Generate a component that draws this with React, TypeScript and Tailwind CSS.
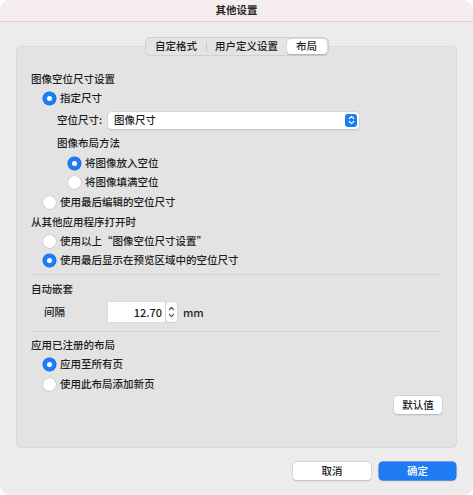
import React from "react";

const font = { fontFamily: '"Noto Sans CJK SC", "Noto Sans", sans-serif' };

function Radio({ checked, label }: { checked?: boolean; label: string }) {
    return (
        <div className="flex items-center gap-[4px]">
            {checked ? (
                <span className="flex h-[13px] w-[13px] items-center justify-center rounded-full bg-[#1b7cf5] shadow-[0_0_0_0.5px_#1468d8]">
                    <span className="h-[5px] w-[5px] rounded-full bg-white" />
                </span>
            ) : (
                <span className="h-[13px] w-[13px] rounded-full bg-white shadow-[0_0_0_0.5px_#c4c4c4,0_0.5px_1px_rgba(0,0,0,0.15)]" />
            )}
            <span>{label}</span>
        </div>
    );
}

function Separator() {
    return <div className="h-px bg-[#d2d2d2]" />;
}

export default function App() {
    return (
        <div className="h-[495px] w-[473px] bg-white" style={font}>
            <div className="flex h-full flex-col overflow-hidden rounded-[10px] bg-[#ececec] text-[10.5px] font-medium leading-none text-[#1e1e1e]">
                {/* title bar */}
                <div className="flex h-[22px] shrink-0 items-center justify-center border-b border-[#d6d2d2] bg-[#f6eeee] font-semibold text-[#2a2a2a]">
                    其他设置
                </div>

                <div className="flex flex-1 flex-col px-[16px] pt-[15px]">
                    {/* tabs */}
                    <div className="relative z-10 flex justify-center">
                        <div className="flex h-[19px] items-center rounded-[5px] border border-[#d0d0d0] bg-[#e4e4e4] p-px">
                            <div className="flex h-full w-[59px] items-center justify-center">自定格式</div>
                            <div className="h-[10px] w-px bg-[#cacaca]" />
                            <div className="flex h-full w-[80px] items-center justify-center">用户定义设置</div>
                            <div className="flex h-full w-[40px] items-center justify-center rounded-[4px] bg-white shadow-[0_0.5px_1.5px_rgba(0,0,0,0.25)]">
                                布局
                            </div>
                        </div>
                    </div>

                    {/* group box */}
                    <div className="-mt-[10px] flex flex-col rounded-[5px] border border-[#d9d9d9] bg-[#e3e3e3] pb-[33px] pl-[14px] pr-[14px] pt-[22px]">
                        <div className="flex h-[20px] items-center">图像空位尺寸设置</div>
                        <div className="flex h-[19px] items-center pl-[12px]">
                            <Radio checked label="指定尺寸" />
                        </div>
                        <div className="flex h-[24px] items-center pl-[26px]">
                            <span className="w-[51px]">空位尺寸:</span>
                            <div className="flex h-[17px] w-[251px] items-center justify-between rounded-[4px] bg-white pl-[6px] pr-[2px] shadow-[0_0_0_0.5px_#cfcfcf,0_0.5px_1.5px_rgba(0,0,0,0.2)]">
                                <span>图像尺寸</span>
                                <span className="flex h-[13px] w-[12px] items-center justify-center rounded-[3px] bg-[#1b7cf5]">
                                    <svg width="7" height="10" viewBox="0 0 7 10" fill="none" stroke="white" strokeWidth="1.3" strokeLinecap="round" strokeLinejoin="round">
                                        <path d="M1.2 3.6 3.5 1.4 5.8 3.6" />
                                        <path d="M1.2 6.4 3.5 8.6 5.8 6.4" />
                                    </svg>
                                </span>
                            </div>
                        </div>
                        <div className="flex h-[22px] items-center pl-[26px]">图像布局方法</div>
                        <div className="flex h-[19px] items-center pl-[37px]">
                            <Radio checked label="将图像放入空位" />
                        </div>
                        <div className="flex h-[19px] items-center pl-[37px]">
                            <Radio label="将图像填满空位" />
                        </div>
                        <div className="flex h-[20px] items-center pl-[12px]">
                            <Radio label="使用最后编辑的空位尺寸" />
                        </div>

                        <div className="flex h-[20px] items-center">从其他应用程序打开时</div>
                        <div className="flex h-[19px] items-center pl-[12px]">
                            <Radio label="使用以上“图像空位尺寸设置”" />
                        </div>
                        <div className="flex h-[19px] items-center pl-[12px]">
                            <Radio checked label="使用最后显示在预览区域中的空位尺寸" />
                        </div>

                        <div className="mt-[4px]">
                            <Separator />
                        </div>

                        <div className="mt-[4px] flex h-[20px] items-center">自动嵌套</div>
                        <div className="mt-[3px] flex h-[20px] items-center pl-[13px]">
                            <span className="w-[64px]">间隔</span>
                            <div className="flex h-[20px] w-[57px] items-center justify-end bg-white pr-[3px] text-[11px] shadow-[0_0_0_0.5px_#d6d6d6]">
                                12.70
                            </div>
                            <div className="ml-[1px] flex h-[20px] w-[11px] flex-col items-center justify-center rounded-[4px] bg-white shadow-[0_0_0_0.5px_#cdcdcd,0_0.5px_1px_rgba(0,0,0,0.15)]">
                                <svg width="7" height="14" viewBox="0 0 7 14" fill="none" stroke="#4a4a4a" strokeWidth="1.1" strokeLinecap="round" strokeLinejoin="round">
                                    <path d="M1.3 4.6 3.5 2.4 5.7 4.6" />
                                    <path d="M1.3 9.4 3.5 11.6 5.7 9.4" />
                                </svg>
                            </div>
                            <span className="ml-[6px] text-[11px]">mm</span>
                        </div>

                        <div className="mt-[9px]">
                            <Separator />
                        </div>

                        <div className="mt-[3px] flex h-[20px] items-center">应用已注册的布局</div>
                        <div className="flex h-[19px] items-center pl-[12px]">
                            <Radio checked label="应用至所有页" />
                        </div>
                        <div className="flex h-[20px] items-center pl-[12px]">
                            <Radio label="使用此布局添加新页" />
                        </div>

                        <div className="mt-[2px] flex justify-end">
                            <button className="flex h-[18px] w-[48px] items-center justify-center rounded-[4px] bg-white shadow-[0_0_0_0.5px_#cbcbcb,0_0.5px_1.5px_rgba(0,0,0,0.25)]">
                                默认值
                            </button>
                        </div>
                    </div>

                    {/* bottom buttons */}
                    <div className="mt-[14px] flex justify-end gap-[8px] pr-px">
                        <button className="flex h-[18px] w-[78px] items-center justify-center rounded-[4px] bg-white shadow-[0_0_0_0.5px_#cbcbcb,0_0.5px_1.5px_rgba(0,0,0,0.25)]">
                            取消
                        </button>
                        <button className="flex h-[18px] w-[77px] items-center justify-center rounded-[4px] bg-[#1f7bf3] text-white shadow-[0_0_0_0.5px_#1766d6,0_0.5px_1.5px_rgba(0,0,0,0.25)]">
                            确定
                        </button>
                    </div>
                </div>
            </div>
        </div>
    );
}
